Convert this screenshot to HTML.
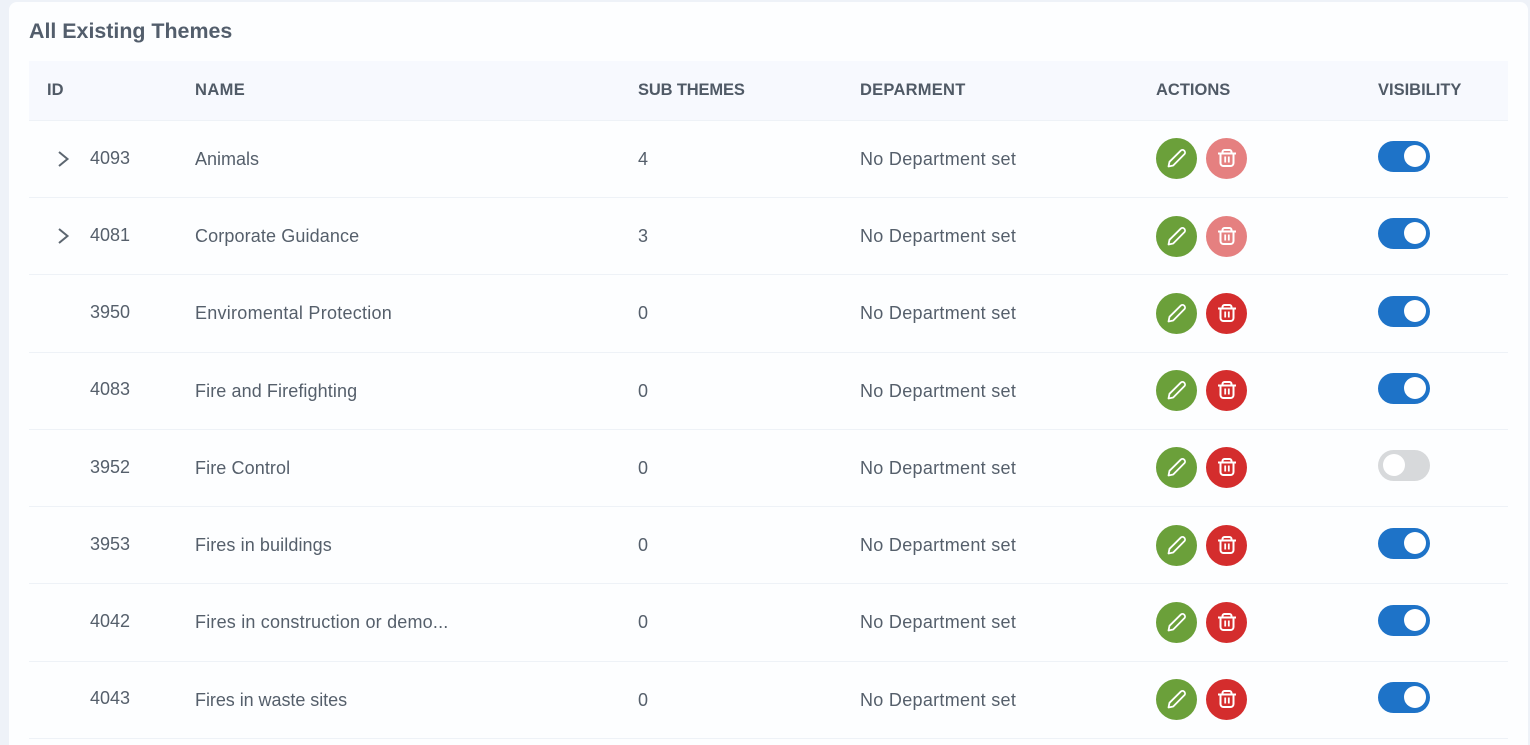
<!DOCTYPE html>
<html><head><meta charset="utf-8"><style>
html,body{margin:0;padding:0;width:1530px;height:745px;overflow:hidden;background:#eef2f8}
body{font-family:"Liberation Sans",sans-serif;color:#555f6b;position:relative}
#card{position:absolute;left:9px;top:2px;width:1519px;height:760px;background:#fdfeff;border-radius:8px}
#head{position:absolute;left:29px;top:61px;width:1479px;height:59px;background:#f7f9fe}
.l{position:absolute;left:29px;width:1479px;height:1px;background:#eef2f7}
.t{position:absolute;white-space:nowrap;line-height:24px;font-size:18px}
.n{margin-top:-1px}
.d{margin-top:-1px;letter-spacing:.3px}
.h{font-weight:bold;font-size:16.5px;color:#505a66}
svg{position:absolute}
.b{position:absolute;width:41px;height:41px;border-radius:50%}
.g{background:#6ba03a}.r{background:#d42d2d}.f{background:#e58080}
.s{position:absolute;left:1378px;width:52px;height:31px;border-radius:16px;background:#1e73c8}
.s i{position:absolute;left:26px;top:4px;width:22px;height:22px;border-radius:50%;background:#fff}
.s.o{background:#d7d9db}.s.o i{left:5px}
</style></head><body>
<div id="card"></div><div id="head"></div>
<div class="t" style="left:29px;top:19px;font-size:21.4px;font-weight:bold;color:#535e6c">All Existing Themes</div>
<div class="t h" style="left:47px;top:78px">ID</div>
<div class="t h" style="left:195px;top:78px;letter-spacing:.4px">NAME</div>
<div class="t h" style="left:638px;top:78px;letter-spacing:-.15px">SUB THEMES</div>
<div class="t h" style="left:860px;top:78px;letter-spacing:.25px">DEPARMENT</div>
<div class="t h" style="left:1156px;top:78px">ACTIONS</div>
<div class="t h" style="left:1378px;top:78px">VISIBILITY</div>
<div class="l" style="top:120px"></div><div class="l" style="top:197px"></div><div class="l" style="top:274px"></div><div class="l" style="top:352px"></div><div class="l" style="top:429px"></div><div class="l" style="top:506px"></div><div class="l" style="top:583px"></div><div class="l" style="top:661px"></div><div class="l" style="top:738px"></div>

<svg style="left:56px;top:150px" width="14" height="18" viewBox="0 0 14 18"><path d="M3 2l8.500 7-8.500 7" fill="none" stroke="#5c6670" stroke-width="2"/></svg>
<svg style="left:56px;top:227px" width="14" height="18" viewBox="0 0 14 18"><path d="M3 2l8.500 7-8.500 7" fill="none" stroke="#5c6670" stroke-width="2"/></svg>

<div class="t" style="left:90px;top:146px">4093</div><div class="t n" style="left:195px;top:148px">Animals</div><div class="t n" style="left:638px;top:148px">4</div><div class="t d" style="left:860px;top:148px">No Department set</div>
<div class="t" style="left:90px;top:223px">4081</div><div class="t n" style="left:195px;top:225px;letter-spacing:.12px">Corporate Guidance</div><div class="t n" style="left:638px;top:225px">3</div><div class="t d" style="left:860px;top:225px">No Department set</div>
<div class="t" style="left:90px;top:300px">3950</div><div class="t n" style="left:195px;top:302px;letter-spacing:.26px">Enviromental Protection</div><div class="t n" style="left:638px;top:302px">0</div><div class="t d" style="left:860px;top:302px">No Department set</div>
<div class="t" style="left:90px;top:377px">4083</div><div class="t n" style="left:195px;top:380px;letter-spacing:.1px">Fire and Firefighting</div><div class="t n" style="left:638px;top:380px">0</div><div class="t d" style="left:860px;top:380px">No Department set</div>
<div class="t" style="left:90px;top:455px">3952</div><div class="t n" style="left:195px;top:457px;letter-spacing:.1px">Fire Control</div><div class="t n" style="left:638px;top:457px">0</div><div class="t d" style="left:860px;top:457px">No Department set</div>
<div class="t" style="left:90px;top:532px">3953</div><div class="t n" style="left:195px;top:534px;letter-spacing:.1px">Fires in buildings</div><div class="t n" style="left:638px;top:534px">0</div><div class="t d" style="left:860px;top:534px">No Department set</div>
<div class="t" style="left:90px;top:609px">4042</div><div class="t n" style="left:195px;top:611px;letter-spacing:.2px">Fires in construction or demo...</div><div class="t n" style="left:638px;top:611px">0</div><div class="t d" style="left:860px;top:611px">No Department set</div>
<div class="t" style="left:90px;top:686px">4043</div><div class="t n" style="left:195px;top:689px;letter-spacing:-.05px">Fires in waste sites</div><div class="t n" style="left:638px;top:689px">0</div><div class="t d" style="left:860px;top:689px">No Department set</div>

<svg width="0" height="0"><defs>
<g id="p"><path d="M5.500 21.500L6.500 16.800L17.700 5.700a2.500 2.500 0 0 1 3.600 3.600L10.200 20.500Z" fill="none" stroke="#fff" stroke-width="1.800" stroke-linejoin="round"/></g>
<g id="d" fill="none" stroke="#fff" stroke-width="2"><path d="M3 7.500h18M7.500 7.500V6a2 2 0 0 1 2-2h5a2 2 0 0 1 2 2V7.500M5.500 7.500V17a3 3 0 0 0 3 3h7a3 3 0 0 0 3-3V7.500"/><path d="M10.200 10.500v6M13.800 10.500v6" stroke-width="1.800"/></g>
</defs></svg>

<div class="b g" style="left:1156px;top:138px"><svg style="left:7px;top:7px" width="26" height="26" viewBox="0 0 26 26"><use href="#p"/></svg></div>
<div class="b f" style="left:1206px;top:138px"><svg style="left:9px;top:8px" width="24" height="24" viewBox="0 0 24 24"><use href="#d"/></svg></div>
<div class="b g" style="left:1156px;top:216px"><svg style="left:7px;top:7px" width="26" height="26" viewBox="0 0 26 26"><use href="#p"/></svg></div>
<div class="b f" style="left:1206px;top:216px"><svg style="left:9px;top:8px" width="24" height="24" viewBox="0 0 24 24"><use href="#d"/></svg></div>
<div class="b g" style="left:1156px;top:293px"><svg style="left:7px;top:7px" width="26" height="26" viewBox="0 0 26 26"><use href="#p"/></svg></div>
<div class="b r" style="left:1206px;top:293px"><svg style="left:9px;top:8px" width="24" height="24" viewBox="0 0 24 24"><use href="#d"/></svg></div>
<div class="b g" style="left:1156px;top:370px"><svg style="left:7px;top:7px" width="26" height="26" viewBox="0 0 26 26"><use href="#p"/></svg></div>
<div class="b r" style="left:1206px;top:370px"><svg style="left:9px;top:8px" width="24" height="24" viewBox="0 0 24 24"><use href="#d"/></svg></div>
<div class="b g" style="left:1156px;top:447px"><svg style="left:7px;top:7px" width="26" height="26" viewBox="0 0 26 26"><use href="#p"/></svg></div>
<div class="b r" style="left:1206px;top:447px"><svg style="left:9px;top:8px" width="24" height="24" viewBox="0 0 24 24"><use href="#d"/></svg></div>
<div class="b g" style="left:1156px;top:525px"><svg style="left:7px;top:7px" width="26" height="26" viewBox="0 0 26 26"><use href="#p"/></svg></div>
<div class="b r" style="left:1206px;top:525px"><svg style="left:9px;top:8px" width="24" height="24" viewBox="0 0 24 24"><use href="#d"/></svg></div>
<div class="b g" style="left:1156px;top:602px"><svg style="left:7px;top:7px" width="26" height="26" viewBox="0 0 26 26"><use href="#p"/></svg></div>
<div class="b r" style="left:1206px;top:602px"><svg style="left:9px;top:8px" width="24" height="24" viewBox="0 0 24 24"><use href="#d"/></svg></div>
<div class="b g" style="left:1156px;top:679px"><svg style="left:7px;top:7px" width="26" height="26" viewBox="0 0 26 26"><use href="#p"/></svg></div>
<div class="b r" style="left:1206px;top:679px"><svg style="left:9px;top:8px" width="24" height="24" viewBox="0 0 24 24"><use href="#d"/></svg></div>

<div class="s" style="top:141px"><i></i></div>
<div class="s" style="top:218px"><i></i></div>
<div class="s" style="top:296px"><i></i></div>
<div class="s" style="top:373px"><i></i></div>
<div class="s o" style="top:450px"><i></i></div>
<div class="s" style="top:528px"><i></i></div>
<div class="s" style="top:605px"><i></i></div>
<div class="s" style="top:682px"><i></i></div>
</body></html>
